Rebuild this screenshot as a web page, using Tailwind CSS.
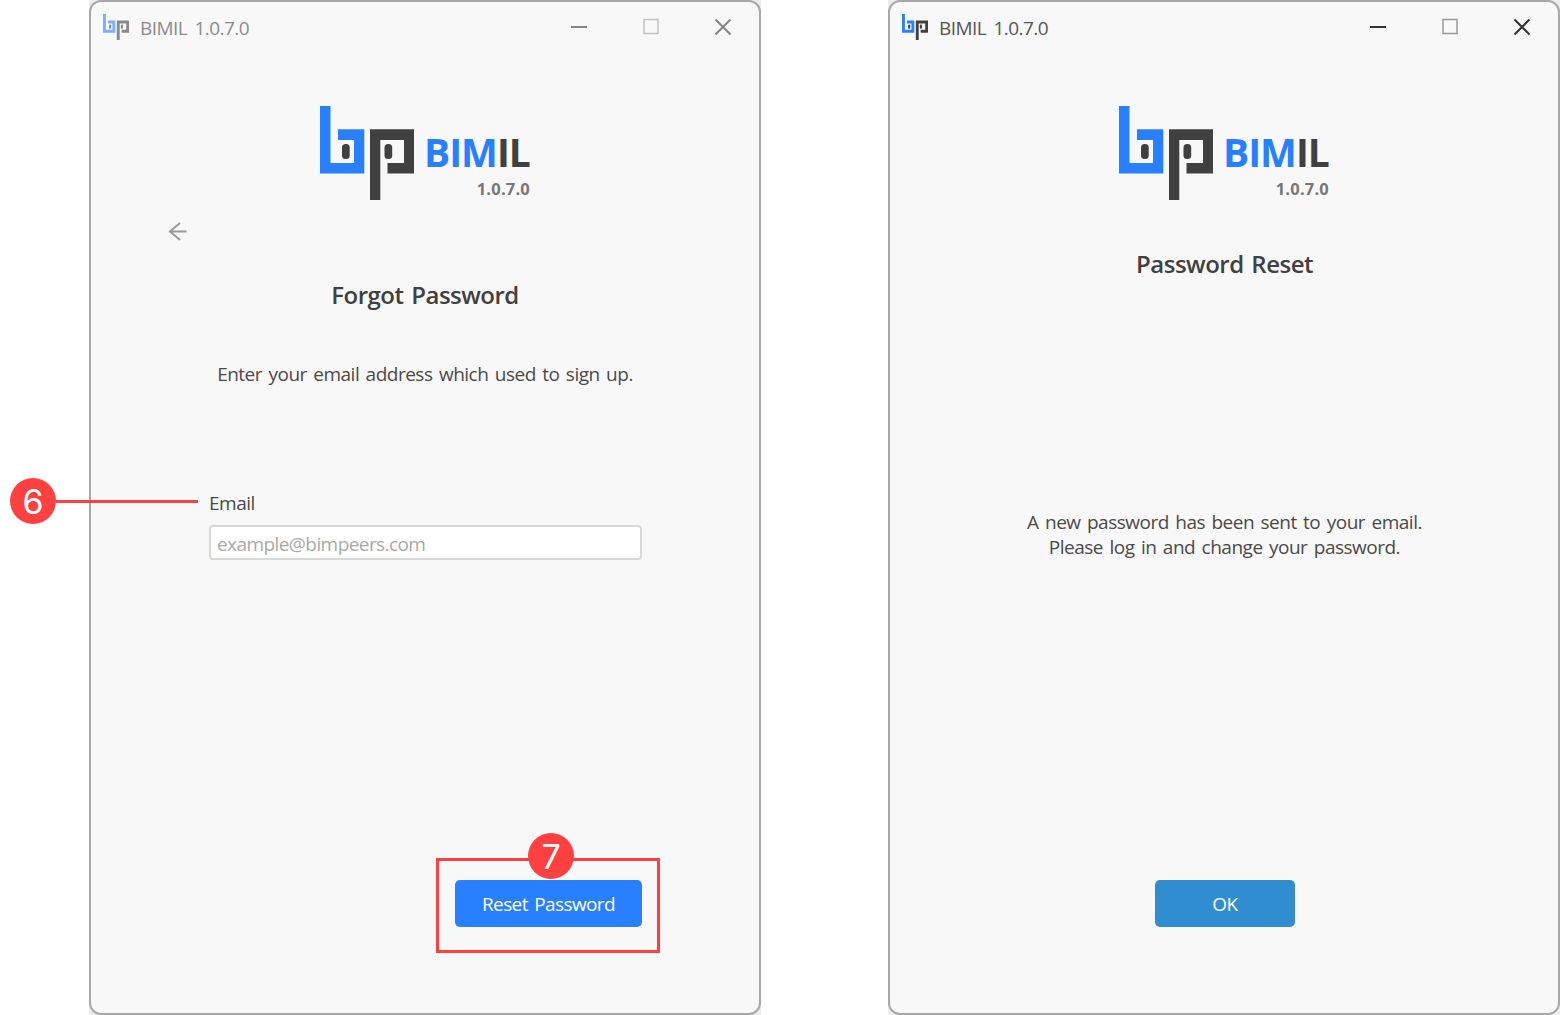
<!DOCTYPE html>
<html lang="en">
<head>
<meta charset="utf-8">
<title>BIMIL 1.0.7.0</title>
<script src="https://cdn.jsdelivr.net/npm/@tailwindcss/browser@4"></script>
</head>
<body class="bg-white font-['Open_Sans',sans-serif] text-[#4a4a4a]">
<svg class="hidden">
  <symbol id="bp" viewBox="0 0 94 94">
    <path fill="#2880ff" d="M0 0H10.5V57H34V34H18V23.300H44.300V67.500H0Z"/>
    <path fill="#404040" d="M50 23.300H94V67.500H67.500V57H84V34H60.300V94H50Z"/>
    <rect fill="#404040" x="22" y="38" width="7.700" height="15" rx="3.500"/>
    <rect fill="#404040" x="64.500" y="38" width="7.700" height="15" rx="3.500"/>
  </symbol>
</svg>
<main class="relative flex h-[1015px] w-[1560px] gap-[127px] overflow-hidden pl-[89px]">
  <section class="w-[672px] shrink-0 bg-[#ededed]">
    <div class="flex h-full flex-col rounded-[12px] border-2 border-[#a8a8a8] bg-[#f8f8f8]">
      <header class="flex h-[50px] items-center pl-3 text-[#8c8c8c]">
        <svg class="h-[26px] w-[26px] opacity-60"><use href="#bp"/></svg>
        <span class="mt-[2px] ml-[11px] text-[19px] leading-[26px] tracking-[-0.55px] [word-spacing:3px] whitespace-nowrap">BIMIL 1.0.7.0</span>
        <svg class="mr-[27px] ml-auto" width="161" height="18" viewBox="0 0 161 18" fill="none" stroke="#858585" stroke-width="2"><path d="M0 9H16"/><path stroke="#c2c2c2" stroke-width="1.500" d="M73 1.500H87V15.500H73Z"/><path d="M144.500 1.500L159.500 16.500M159.500 1.500L144.500 16.500"/></svg>
      </header>
      <div class="mt-[54px] flex h-[94px] pl-[229px]">
        <svg class="h-[94px] w-[94px]"><use href="#bp"/></svg>
        <div class="ml-[9px] w-[107px] pt-[20px]">
          <div class="pl-px text-[39px] leading-[52px] font-bold tracking-[-1px] whitespace-nowrap text-[#404040]"><span class="text-[#2880ff]">BIM</span>IL</div>
          <div class="text-right text-[16.5px] leading-[22px] font-bold tracking-[0.2px] text-[#777]">1.0.7.0</div>
        </div>
      </div>
      <svg class="mt-[22px] ml-[77px]" width="20" height="20" viewBox="0 0 20 20" fill="none" stroke="#9a9a9a" stroke-width="2"><path d="M18.500 9.500H2M12 1L2 9.500L12 18"/></svg>
      <h1 class="mt-[37px] text-center text-[24px] leading-8 font-semibold tracking-[-0.5px] [word-spacing:2px] text-[#404040]"><span>Forgot Password</span></h1>
      <p class="mt-[50px] text-center text-[19px] leading-[26px] tracking-[-0.5px] [word-spacing:2px]"><span>Enter your email address which used to sign up.</span></p>
      <label class="mt-[103px] ml-[118px] text-[19px] leading-[26px] tracking-[-0.5px]"><span>Email</span></label>
      <div class="mt-[9px] ml-[118px] flex h-[35px] w-[433px] items-center rounded-[4px] border-2 border-[#d8d8d8] bg-white pt-[4px] pl-[6px] text-[19px] tracking-[-0.57px] text-[#a9a9a9]"><span>example@bimpeers.com</span></div>
      <button class="mt-[320px] ml-[364px] h-[47px] w-[187px] rounded-[5px] bg-[#2880ff] pt-[2px] text-[19px] tracking-[-0.6px] [word-spacing:2px] text-white"><span>Reset Password</span></button>
    </div>
  </section>
  <section class="w-[672px] shrink-0 bg-[#ededed]">
    <div class="flex h-full flex-col rounded-[12px] border-2 border-[#a8a8a8] bg-[#f8f8f8]">
      <header class="flex h-[50px] items-center pl-3 text-[#555]">
        <svg class="h-[26px] w-[26px]"><use href="#bp"/></svg>
        <span class="mt-[2px] ml-[11px] text-[19px] leading-[26px] tracking-[-0.55px] [word-spacing:3px] whitespace-nowrap">BIMIL 1.0.7.0</span>
        <svg class="mr-[27px] ml-auto" width="161" height="18" viewBox="0 0 161 18" fill="none" stroke="#333" stroke-width="2"><path d="M0 9H16"/><path stroke="#999" stroke-width="1.500" d="M73 1.500H87V15.500H73Z"/><path d="M144.500 1.500L159.500 16.500M159.500 1.500L144.500 16.500"/></svg>
      </header>
      <div class="mt-[54px] flex h-[94px] pl-[229px]">
        <svg class="h-[94px] w-[94px]"><use href="#bp"/></svg>
        <div class="ml-[9px] w-[107px] pt-[20px]">
          <div class="pl-px text-[39px] leading-[52px] font-bold tracking-[-1px] whitespace-nowrap text-[#404040]"><span class="text-[#2880ff]">BIM</span>IL</div>
          <div class="text-right text-[16.5px] leading-[22px] font-bold tracking-[0.2px] text-[#777]">1.0.7.0</div>
        </div>
      </div>
      <h1 class="mt-[48px] pl-px text-center text-[24px] leading-8 font-semibold tracking-[-0.5px] [word-spacing:2px] text-[#404040]"><span>Password Reset</span></h1>
      <p class="mt-[230px] pl-px text-center text-[19px] leading-[25px] tracking-[-0.5px] [word-spacing:2px]">A new password has been sent to your email.<br>Please log in and change your password.</p>
      <button class="mt-[320px] ml-[265px] h-[47px] w-[140px] rounded-[5px] bg-[#308dcf] pt-[2px] text-[19px] tracking-[-0.5px] text-white"><span>OK</span></button>
    </div>
  </section>
  <div class="absolute top-[478px] left-[10px] flex items-center">
    <span class="flex size-[46px] items-center justify-center rounded-full bg-[#ff4040] font-['Inter',sans-serif] text-[34px] text-white">6</span>
    <span class="h-[3px] w-[142px] bg-[#ff4040]"></span>
  </div>
  <div class="absolute top-[858px] left-[436px] h-[95px] w-[224px] border-3 border-[#ff4040]">
    <span class="absolute -top-[28px] left-[89px] flex size-[46px] items-center justify-center rounded-full bg-[#ff4040] font-['Inter',sans-serif] text-[34px] text-white">7</span>
  </div>
</main>
</body>
</html>
